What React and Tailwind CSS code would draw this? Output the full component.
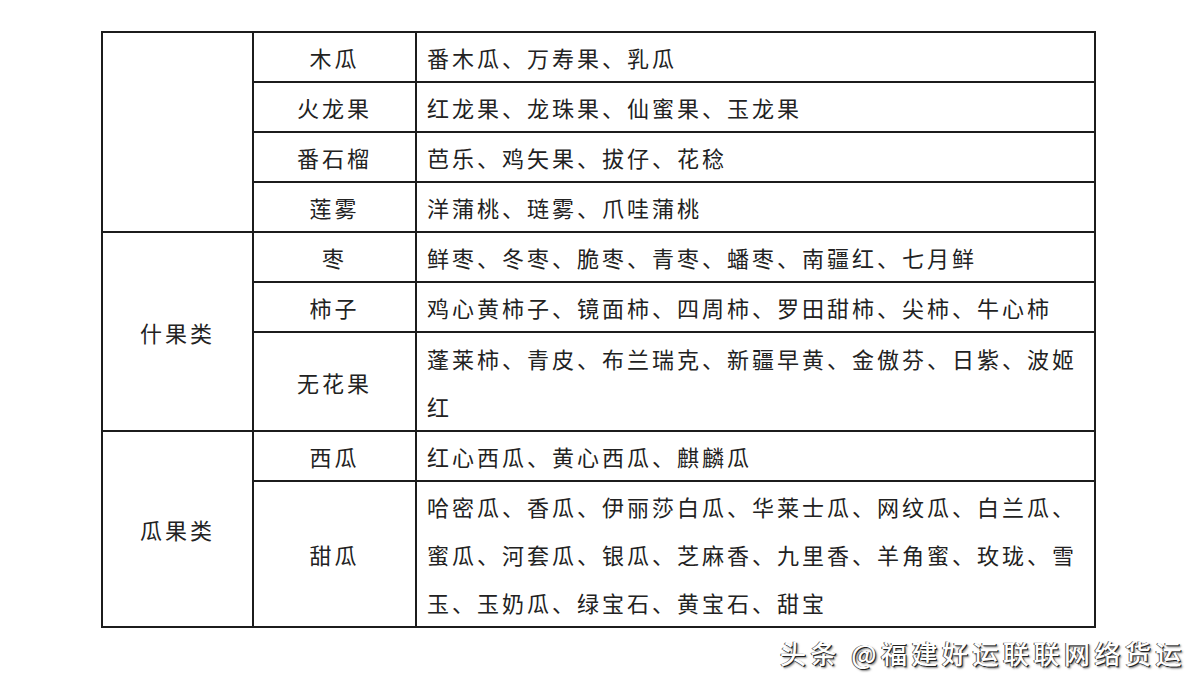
import React from 'react'

const cjk = '"Noto Sans CJK SC", "Noto Sans", sans-serif'

const groups = [
	{
		name: '',
		items: [
			{ name: '木瓜', alias: '番木瓜、万寿果、乳瓜' },
			{ name: '火龙果', alias: '红龙果、龙珠果、仙蜜果、玉龙果' },
			{ name: '番石榴', alias: '芭乐、鸡矢果、拔仔、花稔' },
			{ name: '莲雾', alias: '洋蒲桃、琏雾、爪哇蒲桃' },
		],
	},
	{
		name: '什果类',
		items: [
			{ name: '枣', alias: '鲜枣、冬枣、脆枣、青枣、蟠枣、南疆红、七月鲜' },
			{ name: '柿子', alias: '鸡心黄柿子、镜面柿、四周柿、罗田甜柿、尖柿、牛心柿' },
			{ name: '无花果', alias: '蓬莱柿、青皮、布兰瑞克、新疆早黄、金傲芬、日紫、波姬红', tall: 'h-[99px]' },
		],
	},
	{
		name: '瓜果类',
		items: [
			{ name: '西瓜', alias: '红心西瓜、黄心西瓜、麒麟瓜' },
			{
				name: '甜瓜',
				alias: '哈密瓜、香瓜、伊丽莎白瓜、华莱士瓜、网纹瓜、白兰瓜、蜜瓜、河套瓜、银瓜、芝麻香、九里香、羊角蜜、玫珑、雪玉、玉奶瓜、绿宝石、黄宝石、甜宝',
				tall: 'h-[146px]',
			},
		],
	},
]

const cell = 'border-2 border-[#1c1c1c] align-middle'

const App = () => {
	return (
		<div className="w-[1200px] h-[691px] bg-white overflow-hidden text-[#222]" style={{ fontFamily: cjk }}>
			<div className="pt-[31px] pl-[101px]">
				<table className="table-fixed border-collapse w-[993px] text-[22px] tracking-[3px] leading-[48px]">
					<colgroup>
						<col className="w-[151px]" />
						<col className="w-[163px]" />
						<col className="w-[679px]" />
					</colgroup>
					<tbody>
						{groups.map((g) =>
							g.items.map((item, i) => (
								<tr key={item.name} className={item.tall || 'h-[49px]'}>
									{i === 0 && (
										<td rowSpan={g.items.length} className={`${cell} text-center`}>
											{g.name}
										</td>
									)}
									<td className={`${cell} text-center`}>{item.name}</td>
									<td className={`${cell} pl-[10px] pr-[8px]`}>{item.alias}</td>
								</tr>
							))
						)}
					</tbody>
				</table>
			</div>
			<div className="flex justify-end pr-[14px] mt-[10px]">
				<span className="text-[26px] leading-[30px] tracking-[4.5px] font-medium text-white [text-shadow:1px_1px_0_#222,-1px_0_0_#555,2px_2px_2px_rgba(0,0,0,0.5)]">
					头条 @福建好运联联网络货运
				</span>
			</div>
		</div>
	)
}

export default App
